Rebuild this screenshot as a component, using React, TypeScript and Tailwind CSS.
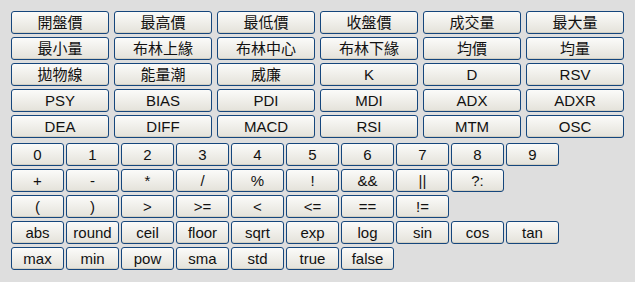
import React from "react";

const wide: string[][] = [
  ["開盤價", "最高價", "最低價", "收盤價", "成交量", "最大量"],
  ["最小量", "布林上緣", "布林中心", "布林下緣", "均價", "均量"],
  ["拋物線", "能量潮", "威廉", "K", "D", "RSV"],
  ["PSY", "BIAS", "PDI", "MDI", "ADX", "ADXR"],
  ["DEA", "DIFF", "MACD", "RSI", "MTM", "OSC"],
];

const small: string[][] = [
  ["0", "1", "2", "3", "4", "5", "6", "7", "8", "9"],
  ["+", "-", "*", "/", "%", "!", "&&", "||", "?:"],
  ["(", ")", ">", ">=", "<", "<=", "==", "!="],
  ["abs", "round", "ceil", "floor", "sqrt", "exp", "log", "sin", "cos", "tan"],
  ["max", "min", "pow", "sma", "std", "true", "false"],
];

const btn =
  "h-[23px] flex items-center justify-center rounded-[3px] border-[1.5px] border-[#15467c] bg-gradient-to-b from-[#fbfbf9] to-[#e4e2da] text-[15px] leading-none text-[#111] shadow-[inset_0_-1px_0_#d2cfc4]";

export default function App() {
  return (
    <div
      className="w-[635px] h-[282px] bg-[#dedede] pl-[11px] pt-[11px] flex flex-col"
      style={{ fontFamily: '"Liberation Sans", Arial, "Noto Sans CJK TC", sans-serif' }}
    >
      <div className="flex flex-col gap-[3px]">
        {wide.map((row, i) => (
          <div key={i} className="flex gap-[5px]">
            {row.map((t) => (
              <button key={t} className={`${btn} w-[98px]`}>
                {t}
              </button>
            ))}
          </div>
        ))}
      </div>
      <div className="flex flex-col gap-[3px] mt-[5px]">
        {small.map((row, i) => (
          <div key={i} className="flex gap-[2px]">
            {row.map((t) => (
              <button key={t} className={`${btn} w-[53px]`}>
                {t}
              </button>
            ))}
          </div>
        ))}
      </div>
    </div>
  );
}
